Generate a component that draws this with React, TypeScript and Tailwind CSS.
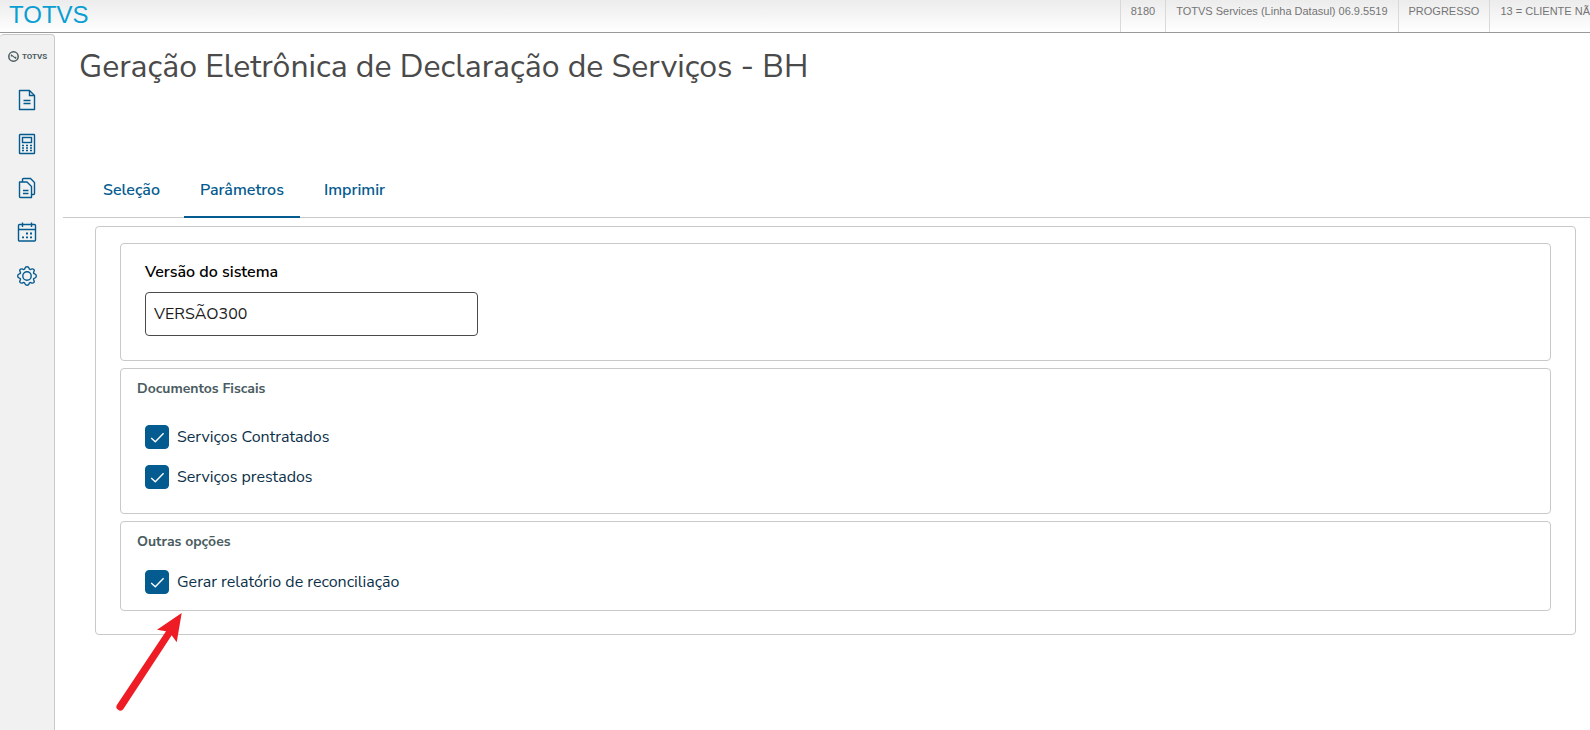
import React, { useState } from 'react';

interface IconProps {
  children: React.ReactNode;
}

const Icon: React.FC<IconProps> = ({ children }) => (
  <svg width="22" height="22" viewBox="0 0 22 22" fill="none" stroke="currentColor" strokeWidth="1.4" aria-hidden="true">
    {children}
  </svg>
);

const menuItems = [
  {
    label: 'Documentos',
    icon: (
      <Icon>
        <path d="M3.5 1.5H13.5L18.5 6.5V20.5H3.5Z" strokeLinejoin="round" />
        <path d="M13.5 2V6.5H18.3M7.5 11.5H14.5M7.5 14.5H14.5" />
      </Icon>
    ),
  },
  {
    label: 'Cálculos',
    icon: (
      <Icon>
        <rect x="3.5" y="1.5" width="15" height="19" rx="0.5" />
        <rect x="6.5" y="4.5" width="9" height="5" />
        <path d="M6 12.5h2m2 0h2m2 0h2M6 15h2m2 0h2m2 0h2M6 17.5h2m2 0h2m2 0h2" />
      </Icon>
    ),
  },
  {
    label: 'Cópias',
    icon: (
      <Icon>
        <path d="M3.5 5H11L15.5 9.5V20.5H4.5Q3.5 20.5 3.5 19.5Z" strokeLinejoin="round" />
        <path d="M6.5 5V2.5Q6.5 1.5 7.5 1.5H14.5L18.5 5.5V16.5Q18.5 17.5 17.5 17.5H16M7 13.5H12.5M7 16.5H12.5" />
      </Icon>
    ),
  },
  {
    label: 'Calendário',
    icon: (
      <Icon>
        <rect x="2.5" y="3.5" width="17" height="16.5" rx="1" />
        <path d="M2.5 8.5H19.5M6.5 1.5V6M15.5 1.5V6" />
        <path d="M10 12.5h2m2 0h2M6 16.3h2m2 0h2m2 0h2" strokeWidth="1.8" />
      </Icon>
    ),
  },
  {
    label: 'Configurações',
    icon: (
      <Icon>
        <circle cx="11" cy="11" r="4.2" />
        <path d="M8.9 3.3C9.2 2.1 9.6 1.7 11 1.7S12.8 2.1 13.1 3.3C13.4 4.4 14.3 4.7 15.3 4.2C16.4 3.6 17 3.7 17.9 4.5C18.6 5.3 18.5 5.9 17.8 6.8C17.2 7.8 17.6 8.6 18.7 8.9C19.9 9.2 20.3 9.6 20.3 11S19.9 12.8 18.7 13.1C17.6 13.4 17.2 14.2 17.8 15.2C18.5 16.1 18.6 16.7 17.9 17.5C17 18.3 16.4 18.4 15.3 17.8C14.3 17.3 13.4 17.6 13.1 18.7C12.8 19.9 12.4 20.3 11 20.3S9.2 19.9 8.9 18.7C8.6 17.6 7.7 17.3 6.7 17.8C5.6 18.4 5 18.3 4.1 17.5C3.4 16.7 3.5 16.1 4.2 15.2C4.8 14.2 4.4 13.4 3.3 13.1C2.1 12.8 1.7 12.4 1.7 11S2.1 9.2 3.3 8.9C4.4 8.6 4.8 7.8 4.2 6.8C3.5 5.9 3.4 5.3 4.1 4.5C5 3.7 5.6 3.6 6.7 4.2C7.7 4.7 8.6 4.4 8.9 3.3Z" />
      </Icon>
    ),
  },
];

const Header = () => (
  <header className="flex h-[33px] border-b border-[#999] bg-linear-to-b from-[#ececec] to-white font-['Liberation_Sans',sans-serif]">
    <span className="pl-[9px] text-2xl leading-[30px] text-[#0a9fd2]">TOTVS</span>
    <div className="ml-auto flex text-[11px] leading-[22px] whitespace-nowrap text-[#747474]">
      <span className="border-l border-[#d9d9d9] px-[10px]">8180</span>
      <span className="border-l border-[#d9d9d9] px-[10px]">TOTVS Services (Linha Datasul) 06.9.5519</span>
      <span className="border-l border-[#d9d9d9] px-[10px]">PROGRESSO</span>
      <span className="border-l border-[#d9d9d9] pl-[10px]">13 = CLIENTE NÃ</span>
    </div>
  </header>
);

const Sidebar = () => (
  <nav className="mt-px w-[55px] shrink-0 rounded-t border-t border-r border-[#c9c9c9] bg-[#f1f1f1]">
    <div className="flex h-[43px] items-center gap-[3px] pl-2 text-[#4a5c60]">
      <svg width="11" height="11" viewBox="0 0 11 11" fill="none" stroke="currentColor" className="shrink-0" aria-hidden="true">
        <circle cx="5.5" cy="5.5" r="4.7" strokeWidth="1.5" />
        <path d="M3 3.6L8 7.6M3.4 5.4V3.8M7.7 5.8V7.4" strokeWidth="1.2" />
      </svg>
      <span className="font-[Roboto,sans-serif] text-[8px] leading-3 font-bold">TOTVS</span>
    </div>
    {menuItems.map((item) => (
      <button key={item.label} aria-label={item.label} className="flex h-11 w-full items-center justify-center text-[#045b8f]">
        {item.icon}
      </button>
    ))}
  </nav>
);

interface CheckboxProps {
  id: string;
  label: string;
}

const Checkbox: React.FC<CheckboxProps> = ({ id, label }) => {
  const [checked, setChecked] = useState(true);

  return (
    <div className="flex h-6 items-center gap-2">
      <span className="relative h-6 w-6">
        <input
          id={id}
          type="checkbox"
          checked={checked}
          onChange={(e) => setChecked(e.target.checked)}
          className="peer block h-6 w-6 appearance-none rounded border border-[#045b8f] bg-white checked:bg-[#045b8f]"
        />
        <svg
          viewBox="0 0 24 24"
          fill="none"
          className="pointer-events-none absolute inset-0 hidden h-6 w-6 stroke-white peer-checked:block"
          aria-hidden="true"
        >
          <path d="M6.2 13L10.3 16.7L18.6 8.3" strokeWidth="1.4" />
        </svg>
      </span>
      <label htmlFor={id} className="text-base leading-6 text-[#0b3048]">
        {label}
      </label>
    </div>
  );
};

const tabs = ['Seleção', 'Parâmetros', 'Imprimir'];

export default function App() {
  const [activeTab, setActiveTab] = useState('Parâmetros');
  const [version, setVersion] = useState('VERSÃO300');

  return (
    <div className="flex min-h-screen flex-col bg-white font-['Nunito_Sans',Lato,sans-serif]">
      <Header />
      <div className="flex grow">
        <Sidebar />
        <main className="min-w-0 grow pl-2">
          <h1 className="pt-3 pl-4 text-[32px] leading-[44px] font-normal text-[#4a4a4a]">
            Geração Eletrônica de Declaração de Serviços - BH
          </h1>

          <div role="tablist" className="mt-[77px] flex gap-2 border-b border-[#c9c9c9] pl-6">
            {tabs.map((tab) => (
              <button
                key={tab}
                role="tab"
                aria-selected={tab === activeTab}
                onClick={() => setActiveTab(tab)}
                className={`-mb-px border-b-2 px-4 pt-3 pb-[14px] text-base leading-6 font-semibold text-[#045b8f] ${
                  tab === activeTab ? 'border-[#045b8f]' : 'border-transparent'
                }`}
              >
                {tab}
              </button>
            ))}
          </div>

          <div className="mt-2 mr-[14px] ml-8 flex flex-col gap-[7px] rounded border border-[#c9c9c9] px-6 pt-4 pb-[23px]">
            <section className="rounded border border-[#c9c9c9] px-6 pt-4 pb-6">
              <label htmlFor="version" className="block text-base leading-6 font-semibold text-black">
                Versão do sistema
              </label>
              <input
                id="version"
                type="text"
                value={version}
                onChange={(e) => setVersion(e.target.value)}
                className="mt-2 block h-11 w-[333px] rounded border border-[#4a4a4a] px-2 text-base text-[#1c1c1c]"
              />
            </section>

            <section className="rounded border border-[#c9c9c9] px-4 pt-2 pb-6">
              <h2 className="text-sm leading-6 font-bold text-[#4a5c60]">Documentos Fiscais</h2>
              <div className="mt-6 flex flex-col gap-4 pl-2">
                <Checkbox id="contratados" label="Serviços Contratados" />
                <Checkbox id="prestados" label="Serviços prestados" />
              </div>
            </section>

            <section className="relative rounded border border-[#c9c9c9] px-4 pt-2 pb-4">
              <h2 className="text-sm leading-6 font-bold text-[#4a5c60]">Outras opções</h2>
              <div className="mt-4 pl-2">
                <Checkbox id="reconciliacao" label="Gerar relatório de reconciliação" />
              </div>
              <svg
                width="72"
                height="104"
                viewBox="0 0 72 104"
                className="pointer-events-none absolute top-full -left-[6px] fill-[#ee1c24]"
                aria-hidden="true"
              >
                <path d="M66.7 3L42 19.7L51 21.3L2.2 94.5A3.7 3.7 0 0 0 8.4 99L56.7 25.3L61.7 32.3Z" />
              </svg>
            </section>
          </div>
        </main>
      </div>
    </div>
  );
}
